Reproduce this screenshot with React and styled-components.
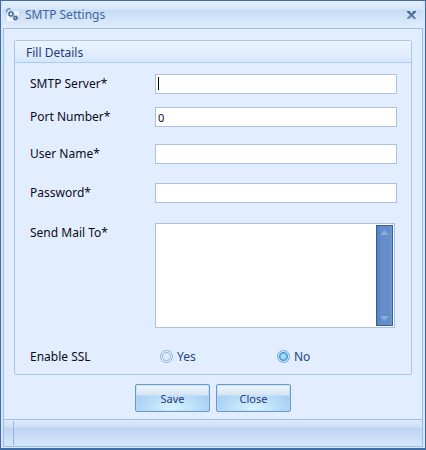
import React, { useState } from "react";
import styled, { createGlobalStyle } from "styled-components";

const App = () => {
    const [form, setForm] = useState({ server: "", port: "0", user: "", password: "", mailTo: "" });
    const [ssl, setSsl] = useState("no");

    const onChange = (e) => setForm({ ...form, [e.target.name]: e.target.value });

    return (
        <>
            <GlobalStyle />
            <Window>
                <TitleBar>
                    <GearIcon />
                    <Title>SMTP Settings</Title>
                    <CloseIconButton type="button" aria-label="Close window">
                        <CloseIcon />
                    </CloseIconButton>
                </TitleBar>
                <Content>
                    <Group>
                        <GroupHeader>Fill Details</GroupHeader>
                        <GroupBody>
                            <Row>
                                <Label htmlFor="server">SMTP Server*</Label>
                                <TextInput
                                    id="server"
                                    name="server"
                                    $active={form.server === ""}
                                    value={form.server}
                                    onChange={onChange}
                                />
                            </Row>
                            <Row $space={13}>
                                <Label htmlFor="port">Port Number*</Label>
                                <TextInput id="port" name="port" value={form.port} onChange={onChange} />
                            </Row>
                            <Row $space={17}>
                                <Label htmlFor="user">User Name*</Label>
                                <TextInput id="user" name="user" value={form.user} onChange={onChange} />
                            </Row>
                            <Row $space={19}>
                                <Label htmlFor="password">Password*</Label>
                                <TextInput
                                    id="password"
                                    name="password"
                                    type="password"
                                    value={form.password}
                                    onChange={onChange}
                                />
                            </Row>
                            <Row $space={20}>
                                <Label htmlFor="mailTo">Send Mail To*</Label>
                                <MemoBox>
                                    <Memo id="mailTo" name="mailTo" value={form.mailTo} onChange={onChange} />
                                    <ScrollTrack>
                                        <Arrow viewBox="0 0 9 5">
                                            <path d="M0 5 4.5 0 9 5z" fill="#84aede" />
                                        </Arrow>
                                        <Arrow viewBox="0 0 9 5">
                                            <path d="M0 0 4.5 5 9 0z" fill="#84aede" />
                                        </Arrow>
                                    </ScrollTrack>
                                </MemoBox>
                            </Row>
                            <Row $space={19} role="radiogroup" aria-labelledby="ssl">
                                <Label as="span" id="ssl">Enable SSL</Label>
                                <RadioGroup>
                                    <RadioLabel>
                                        <Radio name="ssl" checked={ssl === "yes"} onChange={() => setSsl("yes")} />
                                        Yes
                                    </RadioLabel>
                                    <RadioLabel>
                                        <Radio name="ssl" checked={ssl === "no"} onChange={() => setSsl("no")} />
                                        No
                                    </RadioLabel>
                                </RadioGroup>
                            </Row>
                        </GroupBody>
                    </Group>
                    <Actions>
                        <Button type="button">Save</Button>
                        <Button type="button">Close</Button>
                    </Actions>
                </Content>
                <StatusBar>
                    <StatusGrip />
                </StatusBar>
            </Window>
        </>
    );
};

export default App;

const GearIcon = () => (
    <svg width="14" height="16" viewBox="0 0 14 16" aria-hidden="true">
        <path d="M1 4h12v11H1z" fill="#f3f6fa" />
        <path d="M1 15h12V5" fill="none" stroke="#d3dce8" />
        <path d="M.5 5.5C.5 3 2 1.500 4.500 1.500" fill="none" stroke="#7391b8" strokeWidth="1.500" />
        <circle cx="5" cy="7" r="2" fill="#e8f2fd" stroke="#466f9f" strokeWidth="1.600" />
        <circle cx="5" cy="7" r="3" fill="none" stroke="#5f86b4" strokeDasharray="1 1.400" />
        <circle cx="9.500" cy="11" r="1.500" fill="#e8f2fd" stroke="#34649b" strokeWidth="1.500" />
        <circle cx="9.500" cy="11" r="2.500" fill="none" stroke="#5f86b4" strokeDasharray="1 1" />
    </svg>
);

const CloseIcon = () => (
    <svg width="9" height="8" viewBox="0 0 9 8" aria-hidden="true">
        <defs>
            <linearGradient id="cross" x1="0" y1="0" x2="0" y2="1">
                <stop offset="0" stopColor="#3f5c86" />
                <stop offset="1" stopColor="#7790b6" />
            </linearGradient>
        </defs>
        <path d="M0 0h2.500l2 2.500L6.500 0H9v1L6 4l3 3v1H6.500l-2-2.500L2.500 8H0V7l3-3L0 1z" fill="url(#cross)" />
    </svg>
);

const GlobalStyle = createGlobalStyle`
  * {
    box-sizing: border-box;
  }
  body {
    margin: 0;
    font-family: "Noto Sans", "DejaVu Sans", sans-serif;
    font-size: 12px;
    color: #0b0b1c;
  }
  button, input, textarea {
    font: inherit;
  }
`;

const Window = styled.div`
  display: flex;
  flex-direction: column;
  min-height: 100vh;
  padding: 0 2px 1px;
  border: solid #426da3;
  border-width: 1px 1px 2px;
  background: #d5e6fb;
`;

const TitleBar = styled.header`
  display: flex;
  align-items: center;
  height: 27px;
  padding: 0 7px 0 3px;
  background: linear-gradient(#e4effd 0, #d7e7fa 8px, #c7dcf5 9px, #e0edfc 100%);
`;

const Title = styled.h1`
  flex: 1;
  margin: 0 0 0 5px;
  font-size: 12px;
  font-weight: 400;
  color: #3f659f;
`;

const CloseIconButton = styled.button`
  display: flex;
  padding: 0;
  border: 0;
  background: none;
`;

const Content = styled.main`
  flex: 1;
  padding: 11px 10px 6px;
  border: 1px solid #9dbfe3;
  border-bottom: 0;
  background: #e2eeff;
`;

const Group = styled.section`
  border: 1px solid #a9c7e9;
  border-radius: 2px;
`;

const GroupHeader = styled.h2`
  height: 22px;
  margin: 0;
  padding-left: 11px;
  border-bottom: 1px solid #a9cdf0;
  background: linear-gradient(#edf5ff, #d6e8fd);
  font-size: 12px;
  font-weight: 400;
  line-height: 23px;
  color: #1e3c7b;
`;

const GroupBody = styled.div`
  padding: 11px 14px 8px 15px;
`;

const Row = styled.div`
  display: grid;
  grid-template-columns: 125px 1fr;
  align-items: start;
  margin-top: ${({ $space = 0 }) => $space}px;
`;

const Label = styled.label`
  line-height: 19px;
`;

const TextInput = styled.input`
  width: 100%;
  height: 20px;
  padding: 0 2px;
  border: 1px solid #abc1de;
  border-radius: 0;
  outline: 0;
  background: #fff;
  font-size: 11px;
  color: #0b0b1c;
  ${({ $active }) =>
      $active && "background: linear-gradient(#000, #000) 2px 2px / 1px 13px no-repeat #fff;"}
`;

const MemoBox = styled.div`
  display: flex;
  height: 105px;
  margin-right: 2px;
  padding: 1px;
  border: 1px solid #abc1de;
  background: #fff;
`;

const Memo = styled.textarea`
  flex: 1;
  min-width: 0;
  padding: 2px;
  border: 0;
  outline: 0;
  resize: none;
`;

const ScrollTrack = styled.div`
  display: flex;
  flex-direction: column;
  justify-content: space-between;
  align-items: center;
  width: 17px;
  padding: 4px 0;
  border: 1px solid #355f99;
  background: linear-gradient(90deg, #5580bb, #658fca 30%, #638dc8 75%, #7197cb);
`;

const Arrow = styled.svg`
  width: 9px;
  height: 5px;
`;

const RadioGroup = styled.div`
  display: grid;
  grid-template-columns: 117px 1fr;
  padding-left: 5px;
`;

const RadioLabel = styled.label`
  display: flex;
  align-items: center;
  gap: 4px;
  line-height: 19px;
  color: #24437f;
`;

const Radio = styled.input.attrs({ type: "radio" })`
  appearance: none;
  width: 13px;
  height: 13px;
  margin: 0;
  border: 1px solid #8aaedb;
  border-radius: 50%;
  background: radial-gradient(circle, #dfebfb 3px, #9ab9df 4px, #eaf4ff 5px);

  &:checked {
    border-color: #75a4dc;
    background: radial-gradient(circle, #9fe0fb 2px, #3f91d8 4px, #d2ebff 5px);
  }
`;

const Actions = styled.div`
  display: flex;
  justify-content: center;
  gap: 6px;
  margin-top: 9px;
`;

const Button = styled.button`
  width: 75px;
  height: 28px;
  padding: 0;
  border: 1px solid #6b98cb;
  border-radius: 2px;
  background:
    linear-gradient(#f1f7fc, #d5e4f3 10px, transparent 11px),
    radial-gradient(ellipse 40px 26px at 50% 100%, #d9f5ff, #a9d0f3);
  box-shadow: inset 0 0 0 1px rgba(180, 216, 244, 0.6);
  font-size: 11px;
  color: #1e3c7b;
`;

const StatusBar = styled.footer`
  display: flex;
  height: 28px;
  padding: 1px 0;
  border: 1px solid #9dbfe3;
  background: linear-gradient(#dce9fa, #cfe0f6 7px, #bdd5f3 8px, #d5e6fa);
`;

const StatusGrip = styled.div`
  width: 10px;
  border-right: 1px solid #97b7df;
`;
